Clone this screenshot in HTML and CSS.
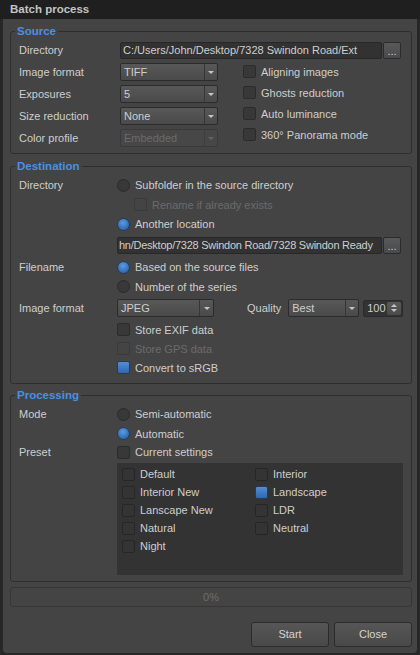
FILE: index.html
```html
<!DOCTYPE html>
<html>
<head>
<meta charset="utf-8">
<title>Batch process</title>
<link rel="stylesheet" href="styles.css">
</head>
<body>
<div class="window">
  <div class="titlebar">Batch process</div>
  <div class="body">

    <fieldset class="group src">
      <legend>Source</legend>
      <div class="row h22">
        <span class="lbl">Directory</span>
        <div class="path">
          <div class="input w262">C:/Users/John/Desktop/7328 Swindon Road/Ext</div>
          <div class="dots">...</div>
        </div>
      </div>
      <div class="src-cols">
        <div class="src-left">
          <div class="row h22"><span class="lbl">Image format</span><div class="combo w98"><span class="val">TIFF</span><span class="arr"></span></div></div>
          <div class="row h22"><span class="lbl">Exposures</span><div class="combo w98"><span class="val">5</span><span class="arr"></span></div></div>
          <div class="row h22"><span class="lbl">Size reduction</span><div class="combo w98"><span class="val">None</span><span class="arr"></span></div></div>
          <div class="row h22"><span class="lbl">Color profile</span><div class="combo w98 dis"><span class="val">Embedded</span><span class="arr"></span></div></div>
        </div>
        <div class="src-right">
          <div class="opt h21"><span class="cb"></span>Aligning images</div>
          <div class="opt h21"><span class="cb"></span>Ghosts reduction</div>
          <div class="opt h21"><span class="cb"></span>Auto luminance</div>
          <div class="opt h21"><span class="cb"></span>360° Panorama mode</div>
        </div>
      </div>
    </fieldset>

    <fieldset class="group dst">
      <legend>Destination</legend>
      <div class="row h20"><span class="lbl">Directory</span><div class="opt"><span class="rb"></span>Subfolder in the source directory</div></div>
      <div class="row h19 ind2"><div class="opt dis"><span class="cb dis"></span>Rename if already exists</div></div>
      <div class="row h20 ind"><div class="opt"><span class="rb on"></span>Another location</div></div>
      <div class="row h23 ind">
        <div class="path">
          <div class="input w265 tight">hn/Desktop/7328 Swindon Road/7328 Swindon Ready</div>
          <div class="dots">...</div>
        </div>
      </div>
      <div class="row h20"><span class="lbl">Filename</span><div class="opt"><span class="rb on"></span>Based on the source files</div></div>
      <div class="row h19 ind"><div class="opt"><span class="rb"></span>Number of the series</div></div>
      <div class="row h24">
        <span class="lbl">Image format</span>
        <div class="combo w97"><span class="val">JPEG</span><span class="arr a14"></span></div>
        <span class="qlbl">Quality</span>
        <div class="combo w71"><span class="val">Best</span><span class="arr"></span></div>
        <div class="spin"><span class="num">100</span><span class="sarr"></span></div>
      </div>
      <div class="row h19 ind"><div class="opt"><span class="cb"></span>Store EXIF data</div></div>
      <div class="row h19 ind"><div class="opt dis"><span class="cb dis"></span>Store GPS data</div></div>
      <div class="row h19 ind"><div class="opt"><span class="cb on"></span>Convert to sRGB</div></div>
    </fieldset>

    <fieldset class="group prc">
      <legend>Processing</legend>
      <div class="row h20"><span class="lbl">Mode</span><div class="opt"><span class="rb"></span>Semi-automatic</div></div>
      <div class="row h19 ind"><div class="opt"><span class="rb on"></span>Automatic</div></div>
      <div class="row h18"><span class="lbl">Preset</span><div class="opt"><span class="cb"></span>Current settings</div></div>
      <div class="presets">
        <div class="opt"><span class="cb"></span>Default</div>
        <div class="opt"><span class="cb"></span>Interior New</div>
        <div class="opt"><span class="cb"></span>Lanscape New</div>
        <div class="opt"><span class="cb"></span>Natural</div>
        <div class="opt"><span class="cb"></span>Night</div>
        <div class="opt"><span class="cb"></span>Interior</div>
        <div class="opt"><span class="cb on"></span>Landscape</div>
        <div class="opt"><span class="cb"></span>LDR</div>
        <div class="opt"><span class="cb"></span>Neutral</div>
      </div>
    </fieldset>

    <div class="progress">0%</div>

    <div class="actions">
      <div class="button">Start</div>
      <div class="button">Close</div>
    </div>
  </div>
</div>
</body>
</html>
```

FILE: styles.css
```css
* { box-sizing: border-box; }
html, body { margin: 0; padding: 0; }
body {
  background: #262626;
  font-family: "Liberation Sans", Arial, sans-serif;
  font-size: 11px;
  color: #cecece;
}
.window {
  width: 420px;
  height: 655px;
  background: #272727;
  display: flex;
  flex-direction: column;
}
.titlebar {
  height: 19px;
  flex: none;
  background: #1f1f1f;
  color: #c4c4c4;
  font-weight: bold;
  font-size: 11.5px;
  line-height: 19px;
  padding-left: 10px;
}
.body {
  flex: 1;
  margin: 0 3px 2px;
  background: #444444;
  border-radius: 0 0 4px 4px;
  display: flex;
  flex-direction: column;
}

/* group boxes */
.group {
  margin: 5px 0 0 7px;
  width: 402px;
  min-width: 0;
  border: 1px solid #2e2e2e;
  border-radius: 3px;
  padding: 0;
}
.group legend {
  margin-left: 4px;
  padding: 0 2px;
  font-weight: bold;
  font-size: 11.5px;
  line-height: 14px;
  color: #4a90e2;
}
.src { padding: 1px 0 4px; --lw: 109px; }
.dst { padding: 2px 0 6px; --lw: 106px; }
.prc { margin-top: 4px; padding: 2px 0 6px; --lw: 106px; }

/* rows */
.row { display: flex; align-items: center; }
.h18 { height: 18px; }
.h19 { height: 19px; }
.h20 { height: 20px; }
.h21 { height: 21px; }
.h22 { height: 22px; }
.h23 { height: 23px; }
.h24 { height: 24px; }
.lbl {
  flex: none;
  width: var(--lw);
  padding-left: 8px;
  white-space: nowrap;
}
.ind { padding-left: var(--lw); }
.ind2 { padding-left: calc(var(--lw) + 17px); }

.src-cols { display: flex; }
.src-left { width: 207px; flex: none; }
.src-right { margin-left: 25px; }

/* option: checkbox / radio + text */
.opt {
  display: flex;
  align-items: center;
  gap: 5px;
  white-space: nowrap;
}
.opt.dis { color: #6b6b6b; }
.cb, .rb {
  flex: none;
  width: 13px;
  height: 13px;
  background: #383838;
  border: 1px solid #2b2b2b;
}
.cb { border-radius: 2px; }
.rb { border-radius: 50%; }
.cb.dis { background: #444; border-color: #3a3a3a; }
.cb.on {
  background: linear-gradient(#4f8ed6, #2f68ad);
  border-color: #2a3a50;
}
.rb.on {
  background: radial-gradient(circle at 45% 35%, #5b9be2, #2f6ab2 70%);
  border-color: #2a3a50;
}

/* text input with browse button */
.path { display: flex; gap: 1px; align-items: center; }
.input {
  height: 17px;
  background: #323232;
  border: 1px solid #282828;
  border-radius: 2px;
  padding-left: 2px;
  line-height: 15px;
  white-space: nowrap;
  overflow: hidden;
}
.input.tight { letter-spacing: -0.25px; padding-left: 1px; }
.w262 { width: 262px; }
.w265 { width: 265px; }
.dots {
  width: 18px;
  height: 17px;
  background: linear-gradient(#595959, #4a4a4a);
  border: 1px solid #2b2b2b;
  border-radius: 2px;
  text-align: center;
  line-height: 17px;
  color: #d0d0d0;
}

/* combo boxes */
.combo {
  display: flex;
  height: 18px;
  border: 1px solid #2b2b2b;
  border-radius: 2px;
  background: linear-gradient(#585858, #4a4a4a);
  flex: none;
}
.w98 { width: 98px; }
.w97 { width: 97px; }
.w71 { width: 71px; }
.combo .val {
  flex: 1;
  padding-left: 3px;
  line-height: 16px;
  white-space: nowrap;
  overflow: hidden;
}
.combo .arr {
  flex: none;
  width: 13px;
  border-left: 1px solid #363636;
  display: flex;
  align-items: center;
  justify-content: center;
}
.combo .arr.a14 { width: 14px; }
.combo .arr::after {
  content: "";
  border-left: 3px solid transparent;
  border-right: 3px solid transparent;
  border-top: 3px solid #c6c6c6;
}
.combo.dis {
  background: #474747;
  border-color: #3a3a3a;
  color: #6a6a6a;
}
.combo.dis .arr { border-left-color: #3d3d3d; }
.combo.dis .arr::after { border-top-color: #646464; }

.qlbl { margin-left: 33px; margin-right: 7px; }

/* spin box */
.spin {
  margin-left: 4px;
  display: flex;
  width: 40px;
  height: 17px;
  background: #333;
  border: 1px solid #2a2a2a;
  border-radius: 2px;
}
.spin .num { flex: 1; padding-left: 3px; line-height: 15px; }
.spin .sarr {
  width: 14px;
  margin: 1px;
  background: linear-gradient(#5a5a5a, #4a4a4a);
  border-radius: 2px;
  display: flex;
  flex-direction: column;
  align-items: center;
  justify-content: center;
  gap: 2px;
}
.spin .sarr::before {
  content: "";
  border-left: 3px solid transparent;
  border-right: 3px solid transparent;
  border-bottom: 3px solid #c6c6c6;
}
.spin .sarr::after {
  content: "";
  border-left: 3px solid transparent;
  border-right: 3px solid transparent;
  border-top: 3px solid #c6c6c6;
}

/* preset list */
.presets {
  margin: 2px 0 0 var(--lw);
  width: 286px;
  height: 112px;
  background: #333333;
  padding: 2px 0 0 5px;
  display: grid;
  grid-auto-flow: column;
  grid-template-rows: repeat(5, 18px);
  grid-template-columns: 133px 1fr;
  align-content: start;
}
.presets .cb { background: #343434; border-color: #262626; }
.presets .cb.on { background: linear-gradient(#4f8ed6, #2f68ad); border-color: #2a3a50; }

/* progress */
.progress {
  margin: 5px 0 0 7px;
  width: 402px;
  height: 20px;
  border: 1px solid #363636;
  border-radius: 3px;
  text-align: center;
  line-height: 18px;
  color: #6e6e6e;
}

/* buttons */
.actions {
  margin-top: 15px;
  padding-right: 5px;
  display: flex;
  justify-content: flex-end;
  gap: 5px;
}
.button {
  width: 78px;
  height: 25px;
  background: linear-gradient(#565656, #494949);
  border: 1px solid #2b2b2b;
  border-radius: 3px;
  text-align: center;
  line-height: 23px;
  color: #d4d4d4;
}
```
